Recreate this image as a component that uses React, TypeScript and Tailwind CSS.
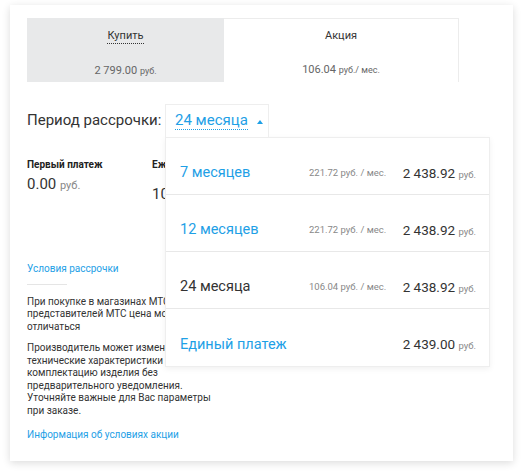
import { useState } from 'react';

const font = { fontFamily: 'Roboto, "Noto Sans", Arial, sans-serif' };

const periods = [
  { label: '7 месяцев', monthly: '221.72', total: '2 438.92', active: false },
  { label: '12 месяцев', monthly: '221.72', total: '2 438.92', active: false },
  { label: '24 месяца', monthly: '106.04', total: '2 438.92', active: true },
  { label: 'Единый платеж', monthly: '', total: '2 439.00', active: false },
];

export default function App() {
  const [open] = useState(true);

  return (
    <div className="w-[524px] h-[472px] bg-white pt-[5px] pl-[10px]" style={font}>
      <div className="w-[503px] h-[456px] bg-white shadow-[0_2px_8px_rgba(0,0,0,0.14)] pt-[13px] pl-[17px]">
        {/* tabs */}
        <div className="flex w-[432px] h-[64px]">
          <div className="w-[197px] bg-[#e8e9ea] flex flex-col items-center pt-[11px]">
            <span className="text-[11px] leading-[14px] text-[#333] border-b border-dotted border-[#333]">Купить</span>
            <span className="mt-[19px] text-[11px] text-[#666]">
              2 799.00 <span className="text-[9px]">руб.</span>
            </span>
          </div>
          <div className="flex-1 border-t border-r border-[#ececec] flex flex-col items-center pt-[10px]">
            <span className="text-[11px] leading-[14px] text-[#333]">Акция</span>
            <span className="mt-[19px] text-[11px] text-[#666]">
              106.04 <span className="text-[9px]">руб./ мес.</span>
            </span>
          </div>
        </div>

        {/* period */}
        <div className="flex items-center mt-[22px] h-[32px]">
          <span className="text-[15px] text-[#333] w-[138px] shrink-0 whitespace-nowrap">Период рассрочки:</span>
          <div className="relative">
            <div className="h-[33px] w-[104px] pl-[9px] flex items-center bg-white border border-b-0 border-[#eeeeee] relative z-20">
              <span className="text-[15px] text-[#1ea0e6] leading-[18px] whitespace-nowrap border-b border-dotted border-[#1ea0e6]">24 месяца</span>
              <svg width="6" height="4" viewBox="0 0 6 4" className="ml-[9px] mt-[2px] shrink-0">
                <path d="M0 4 L3 0 L6 4 Z" fill="#1ea0e6" />
              </svg>
            </div>
            {open && (
              <div className="absolute left-0 top-[33px] w-[325px] bg-white border border-[#eeeeee] shadow-[0_2px_6px_rgba(0,0,0,0.06)] z-10">
                {periods.map((p, i) => (
                  <div
                    key={p.label}
                    className={`h-[57px] flex items-center pt-[15px] pl-[14px] pr-[13px] whitespace-nowrap ${i < periods.length - 1 ? 'border-b border-[#e8e8e8]' : ''}`}
                  >
                    <span className={`text-[14.5px] w-[129px] shrink-0 ${p.active ? 'text-[#333]' : 'text-[#1ea0e6]'}`}>{p.label}</span>
                    <span className="text-[9.5px] text-[#888]">
                      {p.monthly && `${p.monthly} руб. / мес.`}
                    </span>
                    <span className="ml-auto text-[13.5px] text-[#333]">
                      {p.total} <span className="text-[9.5px] text-[#888]">руб.</span>
                    </span>
                  </div>
                ))}
              </div>
            )}
          </div>
        </div>

        {/* payments */}
        <div className="flex mt-[21px]">
          <div className="w-[125px]">
            <div className="text-[10px] font-bold text-[#222]">Первый платеж</div>
            <div className="text-[15px] text-[#333] mt-[1px]">
              0.00 <span className="text-[11px] text-[#888]">руб.</span>
            </div>
          </div>
          <div>
            <div className="text-[10px] font-bold text-[#222] whitespace-nowrap">Ежемесячный платеж</div>
            <div className="text-[15px] text-[#333] mt-[11px]">
              106.04 <span className="text-[11px] text-[#888]">руб.</span>
            </div>
          </div>
        </div>

        {/* conditions */}
        <div className="mt-[55px] text-[10px] text-[#1ea0e6]">Условия рассрочки</div>
        <div className="w-[40px] h-px bg-[#e5e5e5] mt-[8px]" />
        <div className="w-[196px] text-[10px] leading-[12.5px] text-[#333] mt-[11px]">
          <p>При покупке в магазинах МТС или у представителей МТС цена может отличаться</p>
          <p className="mt-[9px]">
            Производитель может изменять технические характеристики и комплектацию изделия без предварительного
            уведомления. Уточняйте важные для Вас параметры при заказе.
          </p>
        </div>
        <div className="mt-[10px] text-[10px] text-[#1ea0e6]">Информация об условиях акции</div>
      </div>
    </div>
  );
}
